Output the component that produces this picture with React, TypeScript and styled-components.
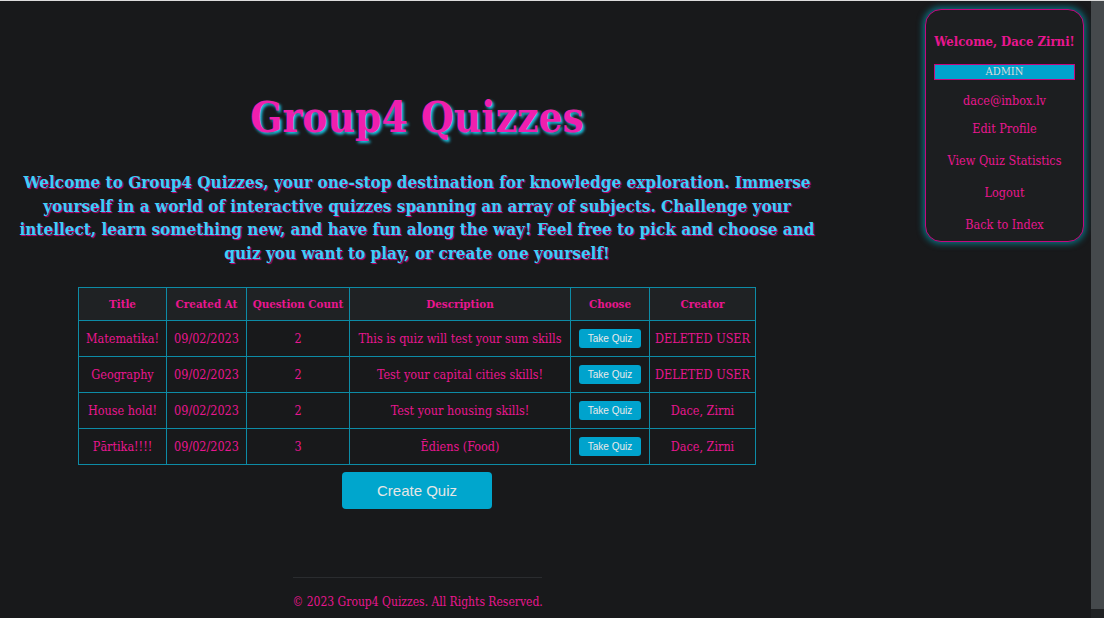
import React from "react";
import styled, { createGlobalStyle } from "styled-components";

const GlobalStyle = createGlobalStyle`
  html, body {
    margin: 0;
    background: #18191b;
    overflow: hidden;
  }
  body {
    font-family: "DejaVu Serif Condensed", "DejaVu Serif", serif;
    color: #e8168f;
  }
`;

const Window = styled.div`
  border-top: 1px solid #dcdcdc;
  height: 617px;
  display: flex;
  overflow: hidden;
`;

const Page = styled.div`
  flex: 1;
  display: flex;
  align-items: flex-start;
`;

const ScrollBar = styled.div`
  width: 13px;
  display: flex;
  flex-direction: column;
`;

const ScrollThumb = styled.div`
  flex: 1;
  background: #45494c;
`;

const ScrollTrack = styled.div`
  height: 9px;
  background: #1f2123;
`;

const Main = styled.main`
  width: 834px;
  display: flex;
  flex-direction: column;
  align-items: center;
  padding-top: 91px;
`;

const Title = styled.h1`
  margin: 0;
  font-size: 42px;
  line-height: 52px;
  font-weight: 700;
  color: #ef1fae;
  text-shadow: 2px 2px 3px #1cc6e8;
`;

const Intro = styled.p`
  margin: 27px 0 0;
  width: 800px;
  text-align: center;
  font-size: 17px;
  line-height: 23.7px;
  font-weight: 700;
  color: #3dcff6;
  text-shadow: 1px 1px 1px #d4007c;
`;

const Table = styled.table`
  margin-top: 21px;
  border-collapse: collapse;
  font-size: 12.5px;
  text-align: center;
`;

const Th = styled.th<{ $w: number }>`
  width: ${(p) => p.$w}px;
  height: 32px;
  padding: 0;
  border: 1px solid #0d8ba6;
  background: #1f2224;
  font-size: 11.5px;
  font-weight: 700;
  color: #e8168f;
`;

const Td = styled.td`
  height: 35px;
  padding: 0;
  border: 1px solid #0d8ba6;
  color: #e8168f;
`;

const SmallButton = styled.button`
  width: 62px;
  height: 19px;
  padding: 0;
  border: none;
  border-radius: 3px;
  background: #00a3cd;
  color: #eaeaea;
  font-family: "Liberation Sans", Arial, sans-serif;
  font-size: 10px;
  cursor: pointer;
`;

const CreateButton = styled.button`
  margin-top: 7px;
  width: 150px;
  height: 37px;
  border: none;
  border-radius: 4px;
  background: #00a6cd;
  color: #e6e6e6;
  font-family: "Liberation Sans", Arial, sans-serif;
  font-size: 15px;
  cursor: pointer;
`;

const Footer = styled.footer`
  margin-top: 68px;
  width: 249px;
  border-top: 1px solid #2a2c2f;
  padding-top: 17px;
  text-align: center;
  font-size: 12px;
  white-space: nowrap;
  color: #e8168f;
`;

const Spacer = styled.div`
  flex: 1;
`;

const Aside = styled.aside`
  width: 157px;
  margin: 8px 7px 0 0;
  padding: 24px 0 8px;
  border: 1px solid #c4087e;
  border-radius: 16px;
  background: #1c1e20;
  box-shadow: 0 0 6px 2px rgba(0, 170, 195, 0.6);
  display: flex;
  flex-direction: column;
  align-items: center;
`;

const Welcome = styled.h3`
  margin: 0 0 15px;
  font-size: 13px;
  font-weight: 700;
  white-space: nowrap;
  color: #e8168f;
`;

const Badge = styled.div`
  width: 139px;
  height: 14px;
  line-height: 14px;
  border: 1px solid #c4087e;
  background: #00a3cd;
  color: #dcdcdc;
  font-size: 11px;
  text-align: center;
  margin-bottom: 13px;
`;

const Email = styled.div`
  font-size: 12.5px;
  line-height: 16px;
  margin-bottom: 12px;
`;

const NavLink = styled.a`
  display: block;
  font-size: 12.5px;
  line-height: 16px;
  margin-bottom: 16px;
  color: #e8168f;
  text-decoration: none;
  white-space: nowrap;
  &:last-child {
    margin-bottom: 0;
  }
`;

const quizzes = [
  { title: "Matematika!", date: "09/02/2023", count: 2, desc: "This is quiz will test your sum skills", creator: "DELETED USER" },
  { title: "Geography", date: "09/02/2023", count: 2, desc: "Test your capital cities skills!", creator: "DELETED USER" },
  { title: "House hold!", date: "09/02/2023", count: 2, desc: "Test your housing skills!", creator: "Dace, Zirni" },
  { title: "Pārtika!!!!", date: "09/02/2023", count: 3, desc: "Ēdiens (Food)", creator: "Dace, Zirni" },
];

export default function App() {
  return (
    <>
      <GlobalStyle />
      <Window>
        <Page>
          <Main>
            <Title>Group4 Quizzes</Title>
            <Intro>
              Welcome to Group4 Quizzes, your one-stop destination for knowledge exploration. Immerse yourself in a world
              of interactive quizzes spanning an array of subjects. Challenge your intellect, learn something new, and have
              fun along the way! Feel free to pick and choose and quiz you want to play, or create one yourself!
            </Intro>
            <Table>
              <thead>
                <tr>
                  <Th $w={87}>Title</Th>
                  <Th $w={79}>Created At</Th>
                  <Th $w={102}>Question Count</Th>
                  <Th $w={220}>Description</Th>
                  <Th $w={78}>Choose</Th>
                  <Th $w={105}>Creator</Th>
                </tr>
              </thead>
              <tbody>
                {quizzes.map((q) => (
                  <tr key={q.title}>
                    <Td>{q.title}</Td>
                    <Td>{q.date}</Td>
                    <Td>{q.count}</Td>
                    <Td>{q.desc}</Td>
                    <Td>
                      <SmallButton>Take Quiz</SmallButton>
                    </Td>
                    <Td>{q.creator}</Td>
                  </tr>
                ))}
              </tbody>
            </Table>
            <CreateButton>Create Quiz</CreateButton>
            <Footer>© 2023 Group4 Quizzes. All Rights Reserved.</Footer>
          </Main>
          <Spacer />
          <Aside>
            <Welcome>Welcome, Dace Zirni!</Welcome>
            <Badge>ADMIN</Badge>
            <Email>dace@inbox.lv</Email>
            <NavLink href="#">Edit Profile</NavLink>
            <NavLink href="#">View Quiz Statistics</NavLink>
            <NavLink href="#">Logout</NavLink>
            <NavLink href="#">Back to Index</NavLink>
          </Aside>
        </Page>
        <ScrollBar>
          <ScrollThumb />
          <ScrollTrack />
        </ScrollBar>
      </Window>
    </>
  );
}
